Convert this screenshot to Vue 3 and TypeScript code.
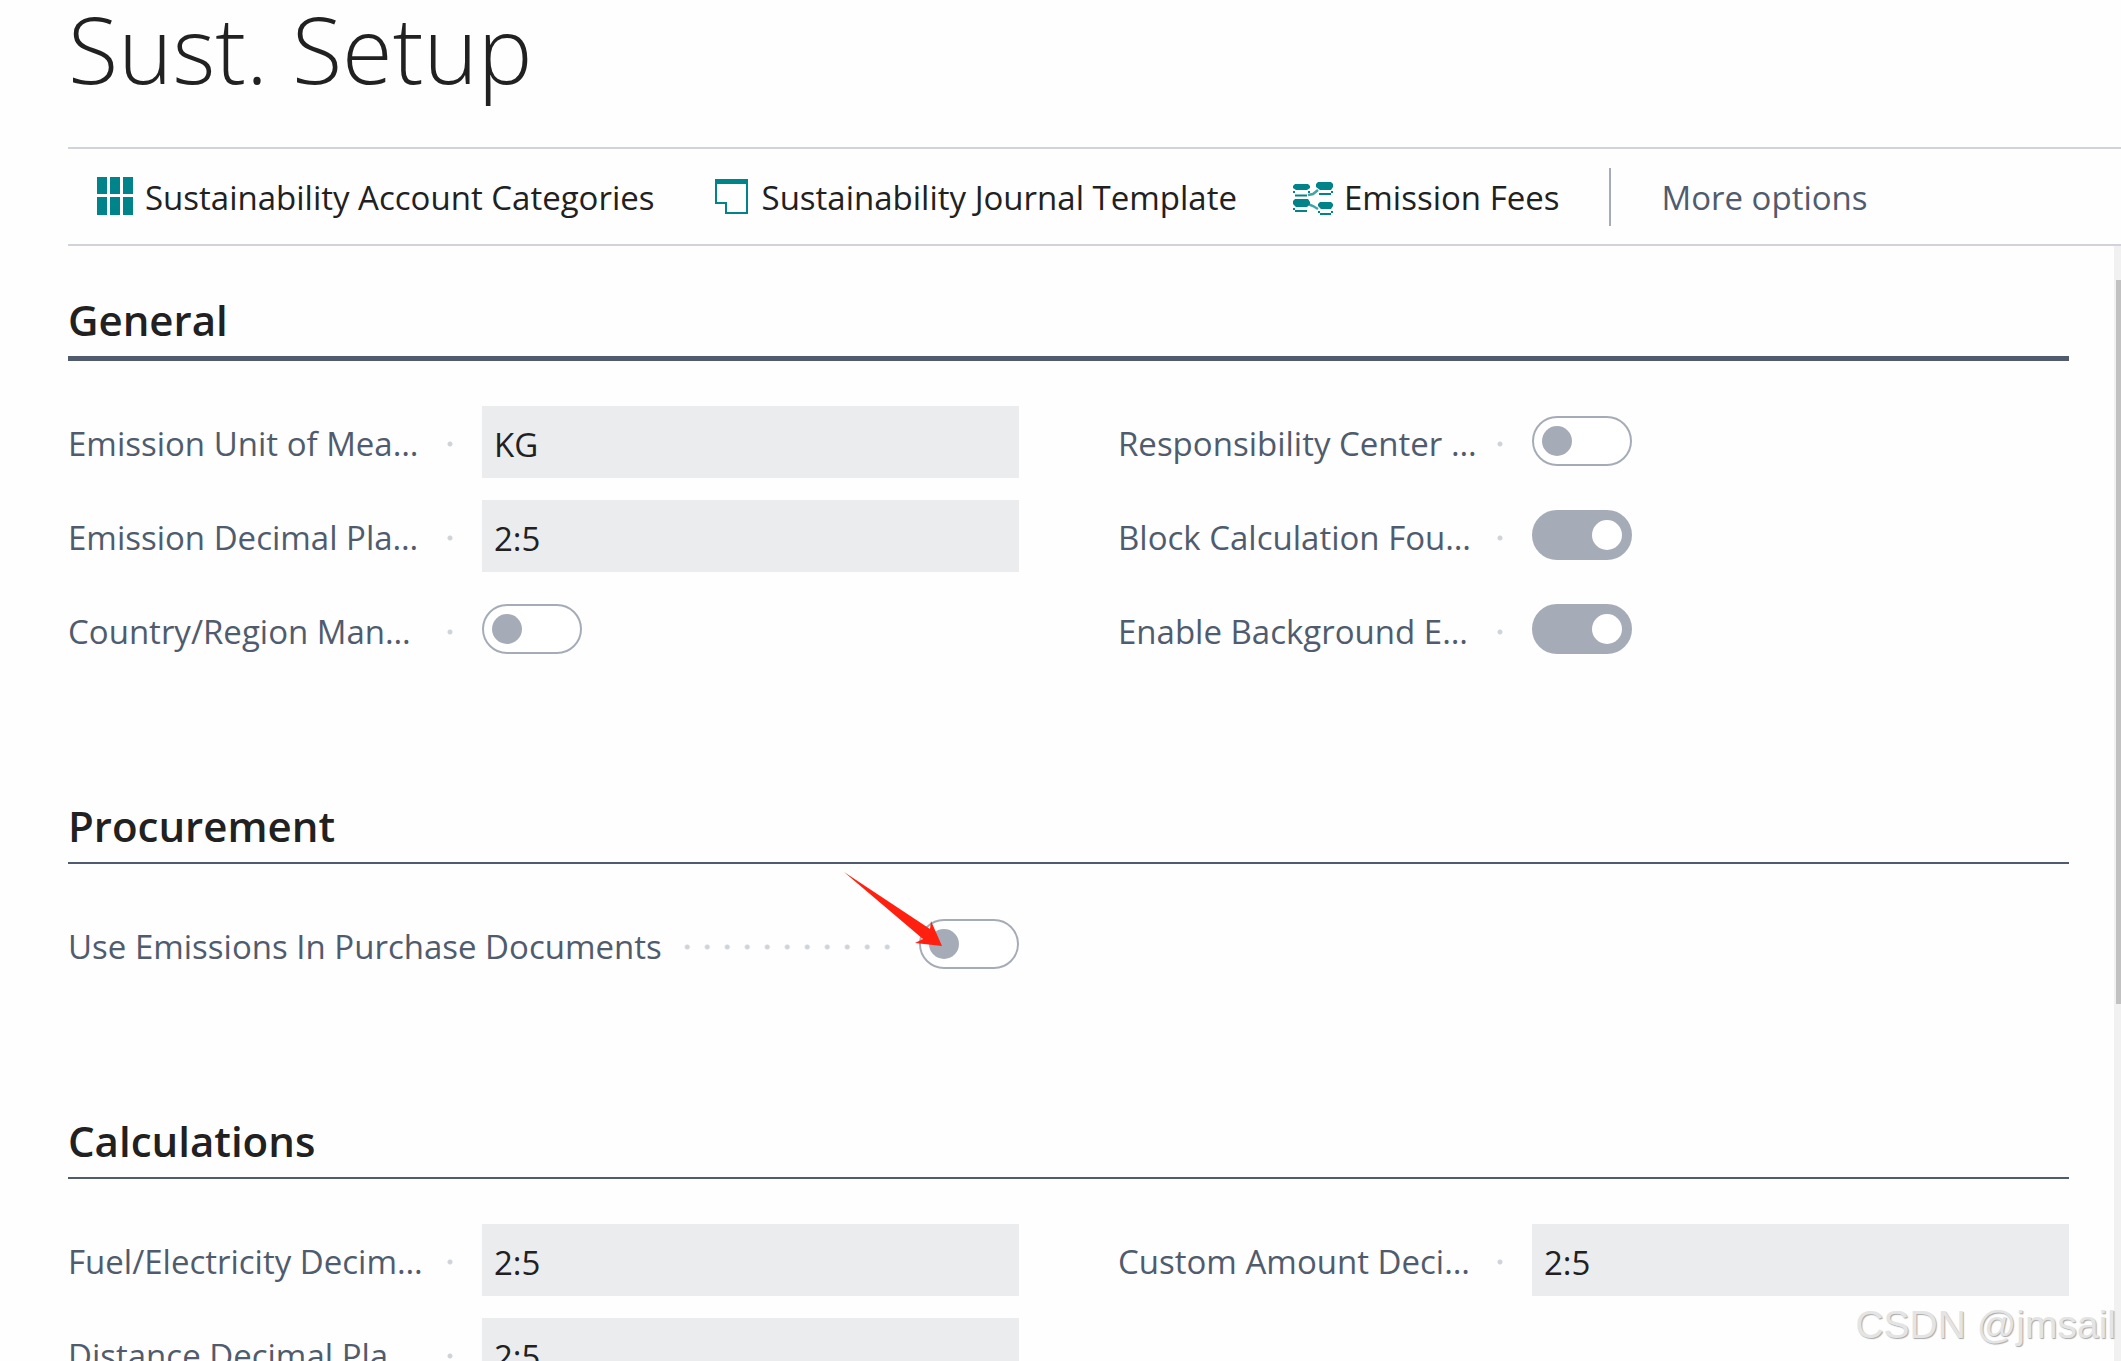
<script setup lang="ts">
import { ref } from 'vue'

interface Field {
  id: string
  label: string
  kind: 'text' | 'toggle'
  value?: string
  checked?: boolean
  wide?: boolean
  marked?: boolean
}

interface Section {
  title: string
  active?: boolean
  columns: Field[][]
}

const sections = ref<Section[]>([
  {
    title: 'General',
    active: true,
    columns: [
      [
        { id: 'unit', label: 'Emission Unit of Mea…', kind: 'text', value: 'KG' },
        { id: 'decimals', label: 'Emission Decimal Pla…', kind: 'text', value: '2:5' },
        { id: 'country', label: 'Country/Region Man…', kind: 'toggle', checked: false },
      ],
      [
        { id: 'center', label: 'Responsibility Center …', kind: 'toggle', checked: false },
        { id: 'block', label: 'Block Calculation Fou…', kind: 'toggle', checked: true },
        { id: 'background', label: 'Enable Background E…', kind: 'toggle', checked: true },
      ],
    ],
  },
  {
    title: 'Procurement',
    columns: [
      [
        {
          id: 'purchase',
          label: 'Use Emissions In Purchase Documents',
          kind: 'toggle',
          checked: false,
          wide: true,
          marked: true,
        },
      ],
      [],
    ],
  },
  {
    title: 'Calculations',
    columns: [
      [
        { id: 'fuel', label: 'Fuel/Electricity Decim…', kind: 'text', value: '2:5' },
        { id: 'distance', label: 'Distance Decimal Pla…', kind: 'text', value: '2:5' },
      ],
      [{ id: 'custom', label: 'Custom Amount Deci…', kind: 'text', value: '2:5' }],
    ],
  },
])
</script>

<template>
  <div class="page">
    <header class="title-bar">
      <h1>Sust. Setup</h1>
    </header>

    <nav class="toolbar">
      <div class="actions">
        <button type="button" class="action">
          <svg width="40" height="38" viewBox="0 0 40 38" fill="#008489">
            <path d="M3 0h10v17H3zM16 0h10v17H16zM29 0h10v17H29zM3 20h10v18H3zM16 20h10v18H16zM29 20h10v18H29z" />
          </svg>
          <span>Sustainability Account Categories</span>
        </button>
        <button type="button" class="action">
          <svg width="40" height="38" viewBox="0 0 40 38" fill="none" stroke="#008489">
            <path d="M5 3v23h10v10h21V3" stroke-width="2" />
            <path d="M4 4.500h33" stroke-width="5" />
          </svg>
          <span>Sustainability Journal Template</span>
        </button>
        <button type="button" class="action">
          <svg width="40" height="38" viewBox="0 0 40 38" fill="#008489">
            <path d="M2 7h13l2 2v2l-3 2H3l-3-2V9zM25 5h13l2 2v3l-2 3H27l-4-3V7zM2 22h13l2 3v2l-3 3H3l-3-3v-3zM27 25h11l2 2v2l-2 3H28l-3-3v-2z" />
            <path d="M2 17.500h12v2H2zM26 16h12v2H26zM2 33h12v2H2zM27 36h11v2H27z" />
            <path d="M0 14h2v2H0zM15 14h2v2h-2zM38 14h2v2h-2zM0 31h2v2H0zM38 34h2v2h-2zM25 34h2v2h-2z" />
            <path d="M15 18l5-1 5-4M15 27l5 2 5 3" fill="none" stroke="#008489" stroke-width="2.500" opacity=".75" />
          </svg>
          <span>Emission Fees</span>
        </button>
      </div>
      <span class="divider"></span>
      <button type="button" class="action more"><span>More options</span></button>
    </nav>

    <div class="body">
      <main class="content">
        <section v-for="s in sections" :key="s.title" class="group">
          <h2 :class="{ active: s.active }">{{ s.title }}</h2>
          <div class="columns">
            <div v-for="(col, i) in s.columns" :key="i" class="column">
              <div v-for="f in col" :key="f.id" class="field">
                <div class="caption" :class="{ wide: f.wide }">
                  <label :for="f.id">{{ f.label }}</label>
                  <span class="dots"></span>
                </div>
                <input v-if="f.kind === 'text'" :id="f.id" v-model="f.value" class="box" type="text" readonly />
                <span v-else class="switch">
                  <input :id="f.id" v-model="f.checked" class="toggle" type="checkbox" role="switch" />
                  <svg v-if="f.marked" class="pointer" width="98" height="76" viewBox="0 0 98 76" fill="#ff2010">
                    <path d="M0 0 86 57 87 49 98 74 71 71 79 67z" />
                  </svg>
                </span>
              </div>
            </div>
          </div>
        </section>
      </main>
      <div class="track"><div class="thumb"></div></div>
    </div>

    <div class="watermark">CSDN @jmsail</div>
  </div>
</template>

<style>
body {
  margin: 0;
  background: #fefefe;
  overflow: hidden;
}
</style>

<style scoped>
.page {
  position: relative;
  display: flex;
  flex-direction: column;
  height: 100vh;
  overflow: hidden;
  color: #212121;
  font-family: 'Open Sans', 'Noto Sans', sans-serif;
  font-size: 33px;
  line-height: 48px;
}
.title-bar {
  flex: none;
  height: 147px;
  padding-left: 68px;
}
h1 {
  margin: 0;
  font-size: 92px;
  line-height: 98px;
  font-weight: 300;
}
.toolbar {
  flex: none;
  display: flex;
  align-items: center;
  gap: 50px;
  height: 95px;
  margin-left: 68px;
  padding-left: 26px;
  border-top: 2px solid #d0d4d9;
  border-bottom: 2px solid #d0d4d9;
}
.actions {
  display: flex;
  gap: 56px;
}
.action {
  display: flex;
  align-items: center;
  gap: 11px;
  padding: 0;
  border: 0;
  background: none;
  color: inherit;
  font: inherit;
  white-space: nowrap;
}
.action svg {
  margin-bottom: 2px;
}
.action span {
  padding-top: 3px;
}
.more {
  color: #505c6d;
}
.divider {
  width: 2px;
  height: 58px;
  background: #a6acb7;
}
.body {
  flex: 1;
  display: flex;
  min-height: 0;
}
.content {
  flex: 1;
  display: flex;
  flex-direction: column;
  gap: 130px;
  min-width: 0;
  overflow: hidden;
  padding: 44px 45px 0 68px;
}
h2 {
  margin: 0 0 45px;
  padding-bottom: 6px;
  border-bottom: 2px solid #505c6d;
  font-size: 42px;
  line-height: 60px;
  font-weight: 600;
}
h2.active {
  border-bottom-width: 5px;
}
.columns {
  display: grid;
  grid-template-columns: 1fr 1fr;
  gap: 99px;
}
.column {
  display: flex;
  flex-direction: column;
  gap: 22px;
}
.field {
  display: flex;
  align-items: center;
  height: 72px;
}
.caption {
  flex: none;
  display: flex;
  align-items: center;
  width: 414px;
  box-sizing: border-box;
  padding: 4px 22px 0 0;
  color: #505c6d;
  white-space: nowrap;
}
.dots {
  flex: none;
  width: 20px;
  height: 6px;
  margin-left: auto;
  background: radial-gradient(circle at center, #d0d4d9 2px, transparent 3px) right center / 20px 6px repeat-x;
}
.caption.wide {
  flex: 1;
}
.wide .dots {
  flex: 1;
  margin-left: 20px;
}
.box {
  flex: 1;
  min-width: 0;
  height: 72px;
  box-sizing: border-box;
  padding: 4px 12px 0;
  border: 0;
  background: #ebecee;
  color: inherit;
  font: inherit;
}
.switch {
  position: relative;
  display: flex;
  margin-bottom: 2px;
}
.toggle {
  appearance: none;
  display: flex;
  align-items: center;
  width: 100px;
  height: 50px;
  box-sizing: border-box;
  margin: 0;
  padding: 0 8px;
  border: 2px solid #a6acb7;
  border-radius: 25px;
  background: #fff;
}
.toggle::before {
  content: '';
  width: 30px;
  height: 30px;
  border-radius: 50%;
  background: #a6acb7;
}
.toggle:checked {
  justify-content: flex-end;
  background: #a6acb7;
}
.toggle:checked::before {
  background: #fff;
}
.pointer {
  position: absolute;
  right: 77px;
  bottom: 21px;
}
.track {
  flex: none;
  width: 7px;
  box-sizing: border-box;
  padding: 34px 0 0 2px;
  background: #f1f1f1;
}
.thumb {
  height: 67%;
  background: #c1c1c1;
}
.watermark {
  position: absolute;
  right: 5px;
  bottom: 12px;
  color: #e4e4e4;
  font-family: 'Liberation Sans', sans-serif;
  font-size: 39px;
  text-shadow: 1px 1px 1px #a8a8a8;
}
</style>
